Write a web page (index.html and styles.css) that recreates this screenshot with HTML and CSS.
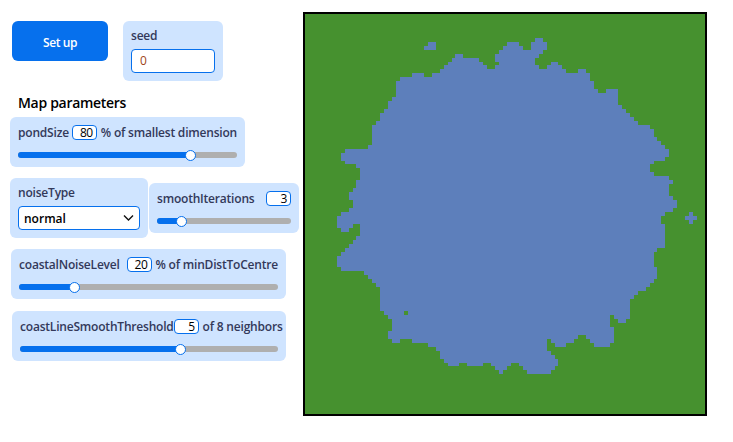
FILE: index.html
```
<!DOCTYPE html>
<html lang="en">
<head>
<meta charset="utf-8">
<title>Pond map</title>
<link rel="stylesheet" href="styles.css">
</head>
<body>
<main class="app">
  <section class="controls">
    <div class="row top-row">
      <button class="setup">Set up</button>
      <div class="panel seed">
        <label class="label">seed</label>
        <div class="field">0</div>
      </div>
    </div>
    <h2 class="heading"><span>Map parameters</span></h2>
    <div class="panel slider pond">
      <div class="line"><span class="label w-pond">pondSize</span><span class="num">80</span><span class="label unit w-pond-unit">% of smallest dimension</span></div>
      <div class="track"><div class="fill" style="width:172px"></div><div class="thumb"></div></div>
    </div>
    <div class="row noise-row">
      <div class="panel noise">
        <label class="label w-noise">noiseType</label>
        <div class="field select"><span>normal</span>
          <svg width="11" height="8" viewBox="0 0 11 8"><path d="M1 1.5 5.5 6 10 1.5" fill="none" stroke="#111" stroke-width="1.4"/></svg>
        </div>
      </div>
      <div class="panel slider smooth">
        <div class="line"><span class="label w-smooth">smoothIterations</span><span class="num">3</span></div>
        <div class="track"><div class="fill" style="width:24px"></div><div class="thumb"></div></div>
      </div>
    </div>
    <div class="panel slider coastal">
      <div class="line"><span class="label w-coastal">coastalNoiseLevel</span><span class="num">20</span><span class="label unit w-coastal-unit">% of minDistToCentre</span></div>
      <div class="track"><div class="fill" style="width:55px"></div><div class="thumb"></div></div>
    </div>
    <div class="panel slider threshold">
      <div class="line"><span class="label w-threshold">coastLineSmoothThreshold</span><span class="num">5</span><span class="label unit w-threshold-unit">of 8 neighbors</span></div>
      <div class="track"><div class="fill" style="width:160px"></div><div class="thumb"></div></div>
    </div>
  </section>
  <svg class="map" width="400" height="400" viewBox="305 14 400 400" shape-rendering="crispEdges">
    <path fill="#5d7fbb" d="M368 149V145H372V125H376V121H380V113H384V109H388V101H392V97H396V81H400V77H412V73H424V77H432V73H440V69H444V65H448V62H452V58H455V54H463V58H479V62H483V65H487V69H495V65H499V62H495V54H499V50H503V46H507V42H519V46H523V50H531V42H535V38H543V42H547V50H543V54H539V58H535V65H539V69H547V65H551V62H558V65H562V69H566V73H578V69H586V73H590V81H594V89H598V93H606V89H618V105H622V109H626V113H630V117H634V121H638V125H650V129H654V137H657V141H661V145H665V149H669V157H665V161H654V164H650V172H654V176H669V180H673V184H669V196H673V200H677V208H673V212H665V216H661V224H665V248H657V252H654V267H657V279H654V283H650V287H646V291H638V295H634V299H630V319H626V323H618V319H614V315H610V327H614V343H610V347H594V343H590V339H586V335H578V339H574V343H566V347H555V343H551V339H547V351H551V355H555V359H558V366H555V370H551V374H527V370H523V366H519V363H511V366H507V370H503V374H499V370H495V366H491V363H483V366H467V363H459V366H448V363H444V359H440V351H436V347H428V343H412V339H400V343H392V339H388V331H392V319H388V315H384V311H380V287H376V283H372V279H368V275H364V271H341V267H337V256H341V252H345V248H349V244H353V240H356V236H360V224H353V228H349V232H341V228H337V216H341V212H349V208H353V200H349V192H353V188H356V180H360V168H356V164H345V161H341V153H345V149Z"/>
    <path fill="#5d7fbb" d="M424 50V46H428V42H436V50ZM685 216H689V212H693V216H697V220H693V224H689V220H685Z"/>
    <path fill="#46912f" d="M404 311h4v4h-4z"/>
  </svg>
</main>
</body>
</html>
```
FILE: styles.css
```
* { box-sizing: border-box; }
body { margin: 0; background: #fff; font-family: "Open Sans", "Noto Sans", sans-serif; font-size: 12px; }
.app { display: flex; height: 442px; padding-top: 12px; }
.controls { width: 303px; flex: none; padding-top: 9px; }
.row { display: flex; align-items: flex-start; }
.top-row { margin-left: 12px; gap: 15px; }
.setup { width: 96px; height: 40px; border: 0; border-radius: 6px; background: #0670ed; color: #fff; font: 600 12px "Open Sans", sans-serif; letter-spacing: -0.4px; padding: 2px 0 0; }
.panel { background: #cfe4ff; border-radius: 6px; }
.label { display: block; flex: none; font-weight: 600; line-height: 16px; color: #33395a; white-space: nowrap; letter-spacing: -0.2px; }
.seed { width: 100px; height: 60px; padding: 7px 8px 0; }
.field { height: 24px; margin-top: 5px; border: 1px solid #0670ed; border-radius: 4px; background: #fff; color: #a04418; line-height: 21px; padding-left: 8px; }
.heading { margin: 12px 0 0 18px; height: 24px; font-size: 14px; font-weight: 600; line-height: 20px; letter-spacing: -0.3px; color: #000; }
.slider { height: 50px; padding: 8px 8px 0; }
.line { display: flex; height: 16px; }
.num { width: 25px; height: 15px; flex: none; margin-left: auto; border: 1px solid #0670ed; border-radius: 4px; background: #fff; color: #000; text-align: right; line-height: 14px; padding-right: 3px; letter-spacing: -0.4px; }
.unit { margin-left: 4px; }
.track { display: flex; align-items: center; height: 6px; margin-top: 11px; background: #afafaf; border-radius: 3px; }
.fill { height: 6px; background: #0670ed; border-radius: 3px 0 0 3px; }
.thumb { width: 11px; height: 11px; flex: none; margin-left: -5px; border: 1px solid #0670ed; border-radius: 50%; background: #fff; }
.pond { width: 235px; margin-left: 10px; }
.noise-row { margin: 11px 0 0 10px; gap: 1px; }
.noise { width: 138px; height: 60px; padding: 7px 8px 0; }
.select { display: flex; align-items: center; justify-content: space-between; padding: 0 5px; color: #000; font-weight: 600; }
.smooth { width: 150px; margin-top: 5px; }
.coastal { width: 275px; margin: 11px 0 0 11px; }
.threshold { width: 274px; margin: 12px 0 0 12px; }
.map { flex: none; box-sizing: content-box; border: 2px solid #000; background: #46912f; }
```
